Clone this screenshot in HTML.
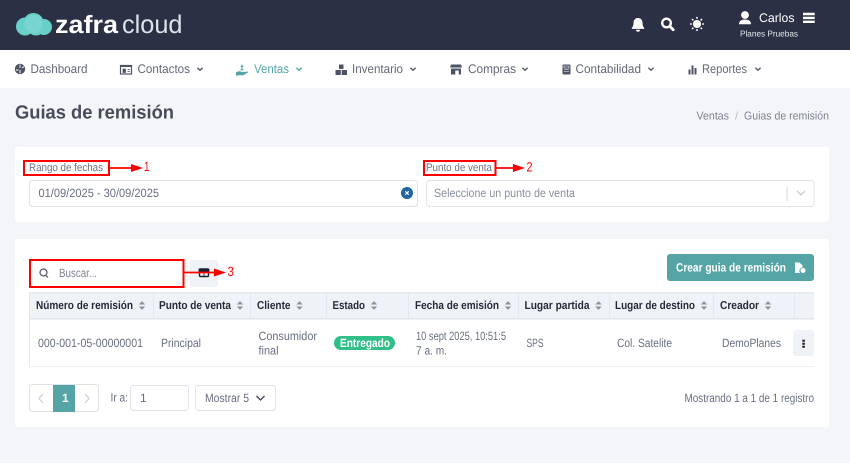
<!DOCTYPE html>
<html lang="es"><head><meta charset="utf-8"><title>Guias de remisión</title>
<style>
html,body{margin:0;padding:0;background:#f4f5f8;width:850px;height:463px;overflow:hidden}
svg{display:block;filter:blur(.3px)}
text{font-family:"Liberation Sans",sans-serif;font-size:12px;fill:#6c7285;text-rendering:geometricPrecision}
.b{font-weight:700}
.h{font-weight:700;fill:#262b3a;font-size:11.5px}
.n{fill:#636979;font-size:12.5px}
.m{fill:#696f82}
</style></head><body>
<svg width="850" height="463" viewBox="0 0 850 463" xmlns="http://www.w3.org/2000/svg">
<defs>
<g id="s"><path d="M-3.2-1 0-4.4 3.2-1zM-3.2 1 0 4.4 3.2 1z" fill="#8b91a3"/></g>
<path id="c" d="M-2.6-1.3 0 1.3 2.6-1.3" fill="none" stroke="#555b6d" stroke-width="1.4"/>
<path id="ct" d="M-2.6-1.3 0 1.3 2.6-1.3" fill="none" stroke="#55a5a6" stroke-width="1.4"/>
</defs>
<rect width="850" height="463" fill="#f4f5f8"/>
<rect width="850" height="50" fill="#2b3044"/>
<rect y="50" width="850" height="38" fill="#fff"/>

<!-- logo -->
<g fill="#69d0c8">
<circle cx="25" cy="26.500" r="9"/><circle cx="33.500" cy="23.500" r="10.500"/><circle cx="36" cy="26.500" r="9"/><circle cx="44" cy="27" r="8"/>
</g>
<circle cx="33.500" cy="24" r="9" fill="#80d9d2" fill-opacity=".7"/>
<text x="55" y="33" class="b" style="font-size:25px;fill:#fff" textLength="63" lengthAdjust="spacingAndGlyphs">zafra</text>
<text x="122" y="33" style="font-size:25.500px;fill:#dfe2e8" textLength="60.500" lengthAdjust="spacingAndGlyphs">cloud</text>

<!-- top right -->
<path d="M638 18c-3 0-4.500 2.300-4.500 5 0 2.400-.6 3.700-1.700 5v.9h12.400v-.9c-1.100-1.300-1.700-2.600-1.700-5 0-2.700-1.500-5-4.500-5z M636 29.800a2 2 0 0 0 4 0z" fill="#fff"/>
<circle cx="666.500" cy="23" r="4.300" fill="none" stroke="#fff" stroke-width="2.400"/><path d="M670 26.500l3.200 3.200" stroke="#fff" stroke-width="2.800" stroke-linecap="round"/>
<circle cx="697" cy="24" r="4" fill="#fff"/>
<g stroke="#fff" stroke-width="1.600" stroke-linecap="round"><path d="M697 17.500v.6M697 29.700v.6M690.700 24h.6M702.700 24h.6M692.500 19.500l.4.4M701.100 28.100l.4.4M692.500 28.500l.4-.4M701.100 19.900l.4-.4"/></g>
<circle cx="745" cy="15" r="3.900" fill="#fff"/><path d="M739 24.300c0-3.400 2.500-4.800 6-4.800s6 1.400 6 4.800z" fill="#fff"/>
<text x="759" y="22" style="font-size:12.500px;fill:#fff" textLength="35.500" lengthAdjust="spacingAndGlyphs">Carlos</text>
<path d="M803 12.800h11.700v2.400H803zM803 16.700h11.700v2.400H803zM803 20.600h11.700v2.400H803z" fill="#fff"/>
<text x="740" y="36.500" style="font-size:8.500px;fill:#e6e8ee" textLength="58" lengthAdjust="spacingAndGlyphs">Planes Pruebas</text>

<!-- nav -->
<circle cx="20" cy="69" r="5.200" fill="#4d5365"/><path d="M20 64.500v3.500M16 70h2.500M22 68l2-1.500M20 70v3.500" stroke="#fff" stroke-width=".9"/>
<text x="30.500" y="73" class="n" textLength="57" lengthAdjust="spacingAndGlyphs">Dashboard</text>
<rect x="120.500" y="65.500" width="11" height="8.500" fill="#fff" stroke="#4d5365" stroke-width="1.200"/><rect x="120" y="65" width="12" height="2" fill="#4d5365"/><path d="M123 69h2.500v3.500H123zM127.500 69.500h2.500M127.500 71.500h2.500" fill="#4d5365" stroke="#4d5365" stroke-width=".7"/>
<text x="137.500" y="73" class="n" textLength="52.500" lengthAdjust="spacingAndGlyphs">Contactos</text>
<use href="#c" x="200" y="69"/>
<path d="M236 72.500c2-1.500 3.500-1.500 5.500-.6h3c1 0 1 1.100 0 1.100h-2.500l5-1.500c1-.2 1.500.7.500 1.300l-4 2.400h-5.500l-2 .8z" fill="#55a5a6"/><path d="M242 64.500v5M240.500 69.800h3M240.700 66.300h2.600" stroke="#55a5a6" stroke-width="1.100" fill="none"/>
<text x="254" y="73" class="n" style="fill:#55a5a6" textLength="35" lengthAdjust="spacingAndGlyphs">Ventas</text>
<use href="#ct" x="299" y="69"/>
<path d="M339 64.500h4.500v4.500H339zM335.500 70h5.300v5h-5.300zM341.700 70h5.300v5h-5.300z" fill="#4d5365"/>
<text x="352" y="73" class="n" textLength="51" lengthAdjust="spacingAndGlyphs">Inventario</text>
<use href="#c" x="413" y="69"/>
<path d="M451 64.500h10l1 3h-12zM451 68.500h10v6h-2.200v-4h-3.500v4H451z" fill="#4d5365"/>
<text x="468" y="73" class="n" textLength="48" lengthAdjust="spacingAndGlyphs">Compras</text>
<use href="#c" x="525" y="69"/>
<rect x="562.500" y="64.500" width="8" height="10" rx="1" fill="#4d5365"/><path d="M564 66h5v2h-5zM564 69.500h5M564 71.500h5" stroke="#fff" stroke-width=".6" fill="none"/>
<text x="575.500" y="73" class="n" textLength="65.500" lengthAdjust="spacingAndGlyphs">Contabilidad</text>
<use href="#c" x="651" y="69"/>
<path d="M688.500 69.500h2v5h-2zM691.500 65.500h2v9h-2zM694.500 68h2v6.500h-2z" fill="#4d5365"/>
<text x="702" y="73" class="n" textLength="45" lengthAdjust="spacingAndGlyphs">Reportes</text>
<use href="#c" x="758" y="69"/>

<!-- title -->
<text x="15" y="118.500" class="b" style="font-size:19px;fill:#474c5b" textLength="159" lengthAdjust="spacingAndGlyphs">Guias de remisión</text>
<text x="696.500" y="119.500" style="font-size:11.500px;fill:#7d8394" textLength="32.500" lengthAdjust="spacingAndGlyphs">Ventas</text>
<text x="735" y="119.500" style="font-size:11px;fill:#b6bac4">/</text>
<text x="744" y="119.500" style="font-size:11.500px;fill:#7d8394" textLength="85" lengthAdjust="spacingAndGlyphs">Guias de remisión</text>

<!-- card 1 -->
<rect x="15" y="147" width="814" height="75" rx="3" fill="#fff"/>
<text x="29" y="171" style="font-size:11px" textLength="74" lengthAdjust="spacingAndGlyphs">Rango de fechas</text>
<text x="426" y="171" style="font-size:11px" textLength="66" lengthAdjust="spacingAndGlyphs">Punto de venta</text>
<rect x="29.500" y="180.500" width="388" height="26" rx="3" fill="#fff" stroke="#dfe3ea"/>
<text x="38.500" y="197" class="m" textLength="120.500" lengthAdjust="spacingAndGlyphs">01/09/2025  - 30/09/2025</text>
<circle cx="407" cy="193" r="6" fill="#1f66a3"/><path d="M405.300 191.300l3.400 3.400M408.700 191.300l-3.400 3.400" stroke="#fff" stroke-width="1.200"/>
<rect x="426.500" y="180.500" width="387.500" height="26" rx="3" fill="#fff" stroke="#dfe3ea"/>
<text x="434" y="197" style="fill:#8a8f9e" textLength="141" lengthAdjust="spacingAndGlyphs">Seleccione un punto de venta</text>
<path d="M787 187v14" stroke="#d5d8df"/>
<path d="M797 191l4 4 4-4" fill="none" stroke="#c4c7cf" stroke-width="1.200"/>

<!-- card 2 -->
<rect x="15" y="239" width="814" height="188" rx="3" fill="#fff"/>
<circle cx="43.500" cy="272.500" r="3.500" fill="none" stroke="#4d5365" stroke-width="1.200"/><path d="M46 275.500l2 2" stroke="#4d5365" stroke-width="1.200"/>
<text x="59" y="277" style="fill:#7f8494" textLength="38" lengthAdjust="spacingAndGlyphs">Buscar...</text>
<rect x="190" y="260" width="28" height="27" rx="3" fill="#eff2f7"/>
<rect x="199.500" y="269" width="9" height="7.500" rx="1" fill="none" stroke="#1c2030" stroke-width="1.400"/><path d="M199 269h10v3h-10zM204 272v4" fill="#1c2030" stroke="#1c2030" stroke-width=".8"/>
<rect x="667" y="254" width="147" height="27" rx="3" fill="#55a5a6"/>
<text x="676" y="271.500" class="b" style="fill:#fff" textLength="110" lengthAdjust="spacingAndGlyphs">Crear guia de remisión</text>
<path d="M795 262.500h4.500l3 3v2a3.500 3.500 0 0 0-2.500 5.500H795z" fill="#fff"/><circle cx="803" cy="270.500" r="2.500" fill="#fff"/>

<!-- table -->
<rect x="29" y="292" width="785" height="27" fill="#eff2f7"/>
<rect x="29" y="292" width="785" height="1.500" fill="#e6e9ef"/>
<rect x="29" y="318" width="785" height="1.500" fill="#dfe3ea"/>
<path d="M29.500 292v75M153.500 292v27M250.500 292v27M326.500 292v27M408.500 292v27M518.500 292v27M609.500 292v27M713.500 292v27M794.500 292v27" stroke="#e4e7ed" fill="none"/>
<path d="M29 366.500h785" stroke="#eef0f4"/>
<text x="36" y="309" class="h" textLength="97" lengthAdjust="spacingAndGlyphs">Número de remisión</text><use href="#s" x="142" y="305.500"/>
<text x="159" y="309" class="h" textLength="72" lengthAdjust="spacingAndGlyphs">Punto de venta</text><use href="#s" x="240" y="305.500"/>
<text x="257" y="309" class="h" textLength="33.500" lengthAdjust="spacingAndGlyphs">Cliente</text><use href="#s" x="299.500" y="305.500"/>
<text x="332.500" y="309" class="h" textLength="32.500" lengthAdjust="spacingAndGlyphs">Estado</text><use href="#s" x="374" y="305.500"/>
<text x="415" y="309" class="h" textLength="84" lengthAdjust="spacingAndGlyphs">Fecha de emisión</text><use href="#s" x="508" y="305.500"/>
<text x="524.500" y="309" class="h" textLength="65" lengthAdjust="spacingAndGlyphs">Lugar partida</text><use href="#s" x="598.500" y="305.500"/>
<text x="615" y="309" class="h" textLength="80" lengthAdjust="spacingAndGlyphs">Lugar de destino</text><use href="#s" x="704" y="305.500"/>
<text x="720" y="309" class="h" textLength="39" lengthAdjust="spacingAndGlyphs">Creador</text><use href="#s" x="768" y="305.500"/>

<text x="38" y="347" class="m" textLength="105" lengthAdjust="spacingAndGlyphs">000-001-05-00000001</text>
<text x="161" y="347" class="m" textLength="40" lengthAdjust="spacingAndGlyphs">Principal</text>
<text x="258.500" y="340" class="m" textLength="58.500" lengthAdjust="spacingAndGlyphs">Consumidor</text>
<text x="258.500" y="354.500" class="m" textLength="20" lengthAdjust="spacingAndGlyphs">final</text>
<rect x="334" y="336" width="61" height="14" rx="7" fill="#2fbf87"/>
<text x="340" y="347" class="b" style="fill:#fff" textLength="50" lengthAdjust="spacingAndGlyphs">Entregado</text>
<text x="416" y="340" class="m" textLength="90" lengthAdjust="spacingAndGlyphs">10 sept 2025, 10:51:5</text>
<text x="416" y="354.500" class="m" textLength="31" lengthAdjust="spacingAndGlyphs">7 a. m.</text>
<text x="526.500" y="347" class="m" textLength="17" lengthAdjust="spacingAndGlyphs">SPS</text>
<text x="617" y="347" class="m" textLength="55" lengthAdjust="spacingAndGlyphs">Col. Satelite</text>
<text x="722" y="347" class="m" textLength="59" lengthAdjust="spacingAndGlyphs">DemoPlanes</text>
<rect x="793" y="330" width="21" height="26" rx="3" fill="#eff2f7"/>
<path d="M802.300 339.700h2.600v2h-2.600zM802.300 342.700h2.600v2h-2.600zM802.300 345.700h2.600v2h-2.600z" fill="#1c2030"/>

<!-- pagination -->
<rect x="29.500" y="384.500" width="69" height="27" rx="3" fill="#fff" stroke="#dfe3ea"/>
<rect x="53" y="385" width="22" height="27" fill="#55a5a6"/>
<path d="M43 394l-4 4.500 4 4.500" fill="none" stroke="#ccd0d8" stroke-width="1.300"/>
<path d="M85 394l4 4.500-4 4.500" fill="none" stroke="#ccd0d8" stroke-width="1.300"/>
<text x="62" y="402" class="b" style="fill:#fff">1</text>
<text x="110.500" y="401.500" class="m" textLength="17.500" lengthAdjust="spacingAndGlyphs">Ir a:</text>
<rect x="130.500" y="385.500" width="58" height="25" rx="3" fill="#fff" stroke="#dfe3ea"/>
<text x="140" y="402" class="m">1</text>
<rect x="195.500" y="385.500" width="80" height="25" rx="3" fill="#fff" stroke="#dfe3ea"/>
<text x="205" y="402" class="m" textLength="44" lengthAdjust="spacingAndGlyphs">Mostrar 5</text>
<path d="M256.500 396l4 4 4-4" fill="none" stroke="#3e4354" stroke-width="1.300"/>
<text x="684.500" y="402" class="m" textLength="129.500" lengthAdjust="spacingAndGlyphs">Mostrando 1 a 1 de 1 registro</text>

<!-- red annotations -->
<g fill="none" stroke="#f00" stroke-width="2">
<rect x="24" y="161" width="85" height="14"/>
<rect x="424" y="161" width="71.500" height="14"/>
<rect x="30" y="260" width="153.500" height="27"/>
</g>
<path d="M109 168h25M496 168h18M184 272.500h30" stroke="#f00" stroke-width="1.800"/>
<path d="M131 164l12 4-12 4zM513 164l12 4-12 4zM214 268.500l12 4-12 4z" fill="#f00"/>
<text x="144" y="171" style="font-size:13.500px;fill:#f00" textLength="5.500" lengthAdjust="spacingAndGlyphs">1</text>
<text x="526.500" y="171.500" style="font-size:13.500px;fill:#f00" textLength="6" lengthAdjust="spacingAndGlyphs">2</text>
<text x="227.500" y="276" style="font-size:13.500px;fill:#f00" textLength="6.500" lengthAdjust="spacingAndGlyphs">3</text>
</svg>
</body></html>
